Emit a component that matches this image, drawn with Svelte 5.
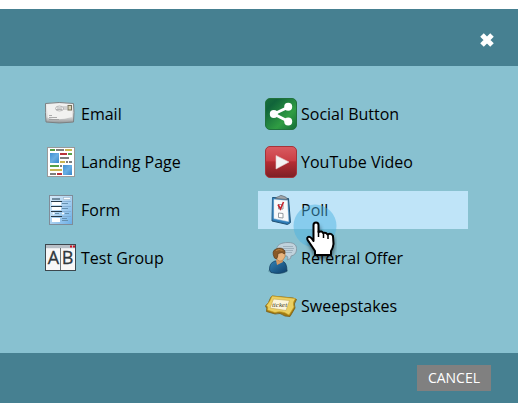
<script>
  const columns = [
    [
      { id: 'email', label: 'Email' },
      { id: 'page', label: 'Landing Page' },
      { id: 'form', label: 'Form' },
      { id: 'test', label: 'Test Group' }
    ],
    [
      { id: 'social', label: 'Social Button' },
      { id: 'video', label: 'YouTube Video' },
      { id: 'poll', label: 'Poll' },
      { id: 'referral', label: 'Referral Offer' },
      { id: 'sweep', label: 'Sweepstakes' }
    ]
  ];
  let active = $state('poll');

  // Content blocks of the landing page icon: x, y, width, height, colour
  const blocks = [
    [5, 3, 5, 2, '#55a047'], [11, 3, 8, 2, '#7d7d7d'], [20, 3, 7, 2, '#c9b552'],
    [15, 7, 7, 2, '#b8323a'], [23, 7, 4, 2, '#55a047'],
    [15, 11, 9, 2, '#7d7d7d'], [15, 15, 5, 2, '#c9b552'], [21, 15, 2, 2, '#7d7d7d'], [24, 15, 3, 2, '#7d7d7d'],
    [5, 19, 9, 2, '#55a047'], [15, 19, 2, 2, '#7d7d7d'],
    [5, 23, 12, 2, '#c9b552'], [5, 27, 6, 2, '#7d7d7d'], [12, 27, 5, 2, '#b8323a']
  ];
</script>

{#snippet icon(id)}
  <svg class="icon" viewBox="0 0 32 32" aria-hidden="true">
    {#if id === 'email'}
      <path d="M.5 5.500Q14 3.500 28.500 5.500Q29.500 14 28.500 24Q14 26 1 24Q0 14 .5 5.500Z" fill="url(#paper)" stroke="#7c8183" />
      <path d="M1.500 6.500Q14 5 27.500 6.500L27 19Q14 23 3 20Z" fill="#f1f1f0" />
      <ellipse cx="14.500" cy="10.500" rx="4" ry="2.500" fill="none" stroke="#aaa" stroke-width=".8" />
      <path d="M12 10h5M18 9h4M18 11h4M11 11.500h6" stroke="#a3a3a3" stroke-width=".8" />
      <rect x="23" y="7.500" width="3.500" height="4.500" fill="#d8d3b8" stroke="#75715a" />
      <path d="M4 17.500h3M4 19.500h8M4 21.500h10" stroke="#999" stroke-width=".8" />
    {:else if id === 'page'}
      <rect x="2.500" y="1.500" width="27" height="29" fill="#fff" stroke="#999" />
      {#each blocks as [x, y, w, h, color]}
        <rect {x} {y} width={w} height={h} fill={color} />
      {/each}
      <rect x="5" y="7" width="9" height="10" fill="url(#blue)" />
      <rect x="18" y="19" width="9" height="10" fill="url(#blue)" />
    {:else if id === 'form'}
      <rect x="4.500" y="1.500" width="23" height="29" fill="url(#sheet)" stroke="#7f8c98" />
      <path d="M7 5h8" stroke="#557184" stroke-width="1.500" />
      <rect x="18.500" y="3.500" width="7" height="2" fill="#fff" stroke="#9db6ca" stroke-width=".6" />
      <g fill="#fff">
        <rect x="7" y="8" width="9" height="3" />
        <rect x="7" y="13" width="9" height="3" />
        <rect x="7" y="24" width="8" height="4" />
        <circle cx="8.500" cy="19.500" r="1" />
        <circle cx="18" cy="19.500" r="1" />
      </g>
      <path d="M6 7.500h11M6 12.500h11M6 17.500h11M6 22.500h11" stroke="#273947" />
      <path d="M17 7.500h9M17 12.500h9M17 17.500h9M17 22.500h9" stroke="#78a5cf" stroke-width=".7" />
      <path d="M17 9.500h6M17 14.500h6M10 19.500h4M20 19.500h4M17 24.500h5M17 26.500h6" stroke="#6590b0" />
    {:else if id === 'test'}
      <rect x=".5" y="2.500" width="30" height="26" fill="#f7f7f7" stroke="#3c474d" />
      <rect x="1" y="3" width="29" height="3" fill="#b8bfc6" />
      <path d="M25 4.500h2M28 4.500h2" stroke="#d01020" stroke-width="2" />
      <path d="M1 6.500h29" stroke="#e8ebed" />
      <path d="M15.500 6v22" stroke="#6b7378" />
      <text x="8.500" y="22" class="letter">A</text>
      <text x="22.500" y="22" class="letter">B</text>
    {:else if id === 'social'}
      <rect x=".5" y=".5" width="31" height="31" rx="4.500" fill="url(#green)" stroke="#21713c" />
      <path d="M23.500 9L9 16l14.500 7.500" fill="none" stroke="#fff" stroke-width="3" />
      <circle cx="23.200" cy="8.800" r="4" fill="#fff" />
      <circle cx="8.800" cy="16" r="4" fill="#fff" />
      <circle cx="23.200" cy="23.500" r="4" fill="#fff" />
    {:else if id === 'video'}
      <rect x=".5" y=".5" width="31" height="31" rx="4.500" fill="url(#red)" stroke="#a63339" />
      <path d="M11 9.500L24 16L11 23Z" fill="#f3f3f3" stroke="#e3c9c9" stroke-width=".6" />
    {:else if id === 'poll'}
      <path d="M7.500 3.500L23.500 4.500L25.500 28.500L22.500 30.500L7 27Z" fill="#2c77b2" stroke="#205073" />
      <path d="M7.500 4L22 5L22 29L7.500 25.500Z" fill="#3684bf" />
      <path d="M9 5.500L22.500 6.500L23.500 27.500L9 24.500Z" fill="#f8f9fa" stroke="#d5e1e9" stroke-width=".5" />
      <path d="M10.500 4.500Q11 3 14 2.500Q15.500 .5 18 2Q22 3 22.500 5.500Z" fill="#a2a6aa" stroke="#5b666e" stroke-width=".7" />
      <path d="M13.500 10.500h4.500v4.500h-4.500zM13.500 19l4.500.5v4.500l-4.500-.5z" fill="#fff" stroke="#8a9095" stroke-width=".9" />
      <path d="M13 10.500L15.500 15L18.500 8" fill="none" stroke="#c5232d" stroke-width="1.600" />
    {:else if id === 'referral'}
      <path d="M12 8C11 3 16 .5 23 .5S32 4 31.500 8Q31 13 26 14Q27 17 22 18Q24 16 22 14Q14 14 12 8Z" fill="#c0d2dc" stroke="#7f929d" stroke-width=".8" />
      <path d="M18 4.500h10M18 6.500h11M19 8.500h9M20 10.500h7" stroke="#8fa3af" stroke-width=".7" />
      <ellipse cx="13" cy="29" rx="10" ry="2.500" fill="#477c8c" opacity=".45" />
      <path d="M4.500 28Q4 21 10 19L17 19Q22 20 22 29Q16 33 6 30.500Z" fill="url(#shirt)" stroke="#103b5c" stroke-width=".7" />
      <path d="M11 18L12 23L18 20L17 17Z" fill="#d79b65" />
      <path d="M10 9Q17 6 20 10Q21 15 18 18Q14 21 11 16Z" fill="#e9b57e" stroke="#a66935" stroke-width=".5" />
      <path d="M9.500 16Q6 9 11 7Q17 4.500 20 9L19.500 12L17 10.500L13 11.500L12.500 15L11.500 17Z" fill="#8a5a26" stroke="#5b3a18" stroke-width=".7" />
      <path d="M11 8.500Q14 6.500 17.500 8.500" fill="none" stroke="#b98042" />
    {:else if id === 'sweep'}
      <path d="M7 6L28 8L31.500 9.500Q28 14 30 18L25 26.500L20 26Q15 22 10 24L1.500 21.500Q2.500 18 .5 16Q4 13 5.500 8Z" fill="#a27b12" stroke="#785b15" stroke-width=".8" />
      <path d="M7 6L30.500 8.500Q27 13 29 17L24 25Q17 20 10 22.500L2.500 20Q3.500 17 1.500 15.500Q5 12 7 6Z" fill="#ecd062" stroke="#c49e22" stroke-width=".6" />
      <path d="M8.500 9L24.500 10.500L21 20.500L5 18Z" fill="#fbf5dc" stroke="#c4a850" stroke-width=".6" />
      <text x="14.500" y="17" class="ticket">ticket</text>
    {/if}
  </svg>
{/snippet}

<svg class="defs" aria-hidden="true">
  <defs>
    <linearGradient id="paper" x2="0" y2="1"><stop stop-color="#e9e9e9" /><stop offset=".7" stop-color="#d9d9d9" /><stop offset="1" stop-color="#929597" /></linearGradient>
    <linearGradient id="blue" x2="1" y2="1"><stop stop-color="#3f90d3" /><stop offset=".5" stop-color="#69aee3" /><stop offset="1" stop-color="#3787cb" /></linearGradient>
    <linearGradient id="sheet" x2="1" y2="1"><stop stop-color="#d6e9f8" /><stop offset=".4" stop-color="#b8d8f2" /><stop offset="1" stop-color="#67ade7" /></linearGradient>
    <linearGradient id="green" x2="1" y2="1"><stop stop-color="#187039" /><stop offset=".2" stop-color="#10643a" /><stop offset=".65" stop-color="#309d43" /><stop offset="1" stop-color="#126c38" /></linearGradient>
    <linearGradient id="red" x2="0" y2="1"><stop stop-color="#d95b61" /><stop offset=".45" stop-color="#ca3f46" /><stop offset=".5" stop-color="#b52c33" /><stop offset="1" stop-color="#7d2024" /></linearGradient>
    <linearGradient id="shirt" x2="1" y2="1"><stop stop-color="#3182b5" /><stop offset="1" stop-color="#0e3e69" /></linearGradient>
  </defs>
</svg>

<main class="dialog">
  <header>
    <button class="close" aria-label="Close">
      <svg viewBox="0 0 14 14" aria-hidden="true"><path d="M2 2L12 12M12 2L2 12" /></svg>
    </button>
  </header>
  <div class="body">
    {#each columns as items}
      <div class="column">
        {#each items as item}
          <button class="item" class:active={active === item.id} onclick={() => (active = item.id)}>
            {@render icon(item.id)}
            <span>{item.label}</span>
            {#if item.id === 'poll'}
              <svg class="pointer" viewBox="0 0 44 58" aria-hidden="true">
                <circle cx="22" cy="22" r="21.500" fill="#4bb1e2" opacity=".48" />
                <path class="shadow" d="M21 21V38L18 34Q15 32 14 35L22 51H37L40 42V32Q39 28 36 30Q34 27 31 29Q29 26 26 28V21Q24 17 21 21Z" />
                <path class="hand" d="M20.500 21Q20.500 18.500 23 18.500T25.500 21V28Q29 26.500 30 29Q33 28 34.500 30.500Q38 28.500 40 32L40.500 40Q40 44 38 47V51H22V47L16 38Q13 34.500 15 33T20.500 37Z" />
                <path class="finger" d="M25.500 27V33M30.500 29V34M35 30.500V35" />
              </svg>
            {/if}
          </button>
        {/each}
      </div>
    {/each}
  </div>
  <footer>
    <button class="cancel">CANCEL</button>
  </footer>
</main>

<style>
  :global(body) {
    background: #fff;
    font-family: "Open Sans", "Noto Sans", sans-serif;
  }
  button {
    border: 0;
    margin: 0;
    font: inherit;
    cursor: pointer;
  }
  .defs {
    position: absolute;
    width: 0;
    height: 0;
  }
  .dialog {
    margin: 9px 7px 0 0;
    background: #88c1d0;
  }
  header,
  footer {
    display: flex;
    align-items: center;
    justify-content: flex-end;
    background: #468091;
  }
  header {
    padding: 20px 20px 15px;
  }
  .close {
    display: flex;
    padding: 4px;
    background: none;
  }
  .close svg {
    width: 14px;
    height: 14px;
    stroke: #fff;
    stroke-width: 5;
  }
  .body {
    display: grid;
    grid-template-columns: 1fr 1fr;
    gap: 10px;
    padding: 29px 50px 28px 38px;
  }
  .column {
    display: flex;
    flex-direction: column;
    gap: 10px;
  }
  .item {
    position: relative;
    display: flex;
    align-items: center;
    gap: 4px;
    padding: 3px 7px;
    background: none;
    color: #000;
    font-size: 16px;
    line-height: 32px;
    text-align: left;
  }
  .item.active {
    background: #bfe4f8;
  }
  .icon {
    flex: none;
    width: 32px;
    height: 32px;
  }
  .letter {
    font-family: "Open Sans", sans-serif;
    font-size: 18px;
    fill: #30383d;
    stroke: #30383d;
    stroke-width: .3;
    text-anchor: middle;
  }
  .ticket {
    font: italic 7px "Liberation Serif", serif;
    fill: #443b20;
    text-anchor: middle;
  }
  .pointer {
    position: absolute;
    z-index: 1;
    top: 13px;
    left: 35px;
    width: 44px;
    height: 58px;
    pointer-events: none;
  }
  .shadow {
    fill: #000;
    opacity: .6;
    filter: blur(2px);
    transform: translate(1px, 3px);
  }
  .hand {
    fill: #fff;
    stroke: #000;
    stroke-width: 2;
    stroke-linejoin: round;
  }
  .finger {
    fill: none;
    stroke: #000;
    stroke-width: 1.500;
  }
  footer {
    padding: 12px 27px;
  }
  .cancel {
    padding: 3px 11px;
    background: #808080;
    color: #fff;
    font-size: 14px;
    line-height: 20px;
  }
</style>
